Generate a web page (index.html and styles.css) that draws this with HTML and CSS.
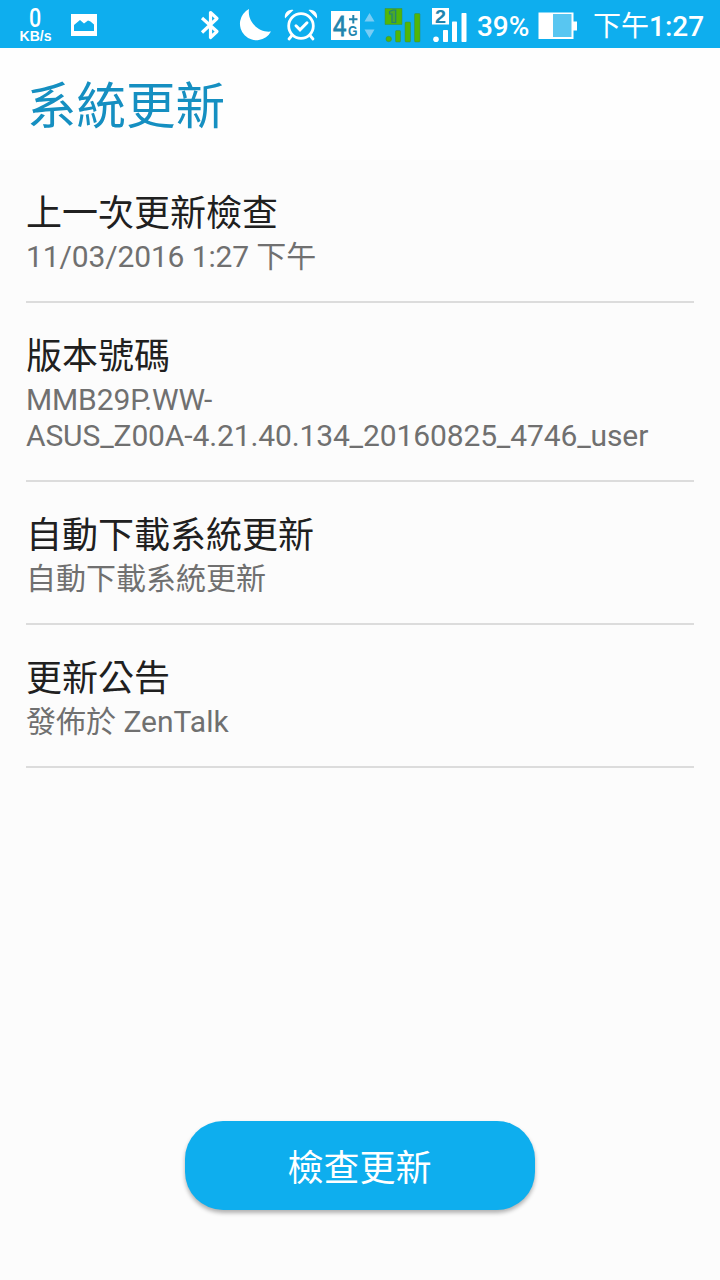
FILE: index.html
```html
<!DOCTYPE html>
<html lang="zh-Hant">
<head>
<meta charset="utf-8">
<title>系統更新</title>
<link rel="stylesheet" href="styles.css">
</head>
<body>
<header class="status">
  <div class="speed"><span class="speed-value">0</span><span class="speed-unit">KB/s</span></div>
  <svg class="picture" width="26" height="22" viewBox="0 0 26 22"><path fill="#fff" fill-rule="evenodd" d="M0 0h26v22H0zM3 17h20v-6.500L19.500 7.500 17 6.500 13 9.500 9 6 3 11z"/></svg>
  <div class="indicators">
    <svg class="bluetooth" width="20" height="34" viewBox="0 0 20 34"><path fill="none" stroke="#fff" stroke-width="3.200" stroke-linejoin="round" d="M2 10l15 13.500-6.500 6V4.500l6.500 6L2 24.500"/></svg>
    <svg class="moon" width="34" height="34" viewBox="0 0 34 34"><path fill="#fff" d="M11 1A16.500 16.500 0 1 0 33 23.500C22 25 9 15 11 1z"/></svg>
    <svg class="alarm" width="34" height="34" viewBox="0 0 34 34"><g fill="none" stroke="#fff" stroke-linecap="round"><circle cx="17" cy="18" r="12.300" stroke-width="2.800"/><path stroke-width="3" d="M12 17.800l4 4 7-7"/><path stroke-width="2.800" d="M7.500 28L5 31M26.500 28l2.500 3"/></g><path fill="#fff" d="M1 10.500C0 5 4 1 9.500 2zM33 10.500C34 5 30 1 24.500 2z"/></svg>
    <svg class="network" width="45" height="30" viewBox="0 0 45 30"><path fill="#fff" d="M0 0h29v29H0z"/><g class="network-text"><text class="network-four" x="2" y="24.800" textLength="13.500" lengthAdjust="spacingAndGlyphs">4</text><text class="network-g" x="17" y="25" textLength="9.500" lengthAdjust="spacingAndGlyphs">G</text></g><path stroke="#2185ae" stroke-width="2" d="M18 8.300h8.500M22.300 4v8.500"/><path fill="#79cdf5" d="M33.500 10.500l5-8.500 5 8.500zM33.500 18.500l5 8.500 5-8.500z"/></svg>
    <svg class="signal-one" width="37" height="36" viewBox="0 0 37 36"><g fill="#51b608" stroke="#388b4c" stroke-width=".5"><path d="M1 1.500h17v16H1z"/><circle cx="4.700" cy="32" r="2.800"/><rect x="11.500" y="23.500" width="5" height="11.500" rx="1"/><rect x="21" y="15" width="5.500" height="20" rx="1"/><rect x="30.500" y="6.500" width="5.500" height="28.500" rx="1"/></g><path fill="#4ba829" stroke="#218078" stroke-width="1.200" d="M5.500 4.500L9 3h2.700v12.500H8v-8.500H5.500z"/></svg>
    <svg class="signal-two" width="37" height="36" viewBox="0 0 37 36"><g fill="#fff"><path d="M0 1h17v16.500H0z"/><circle cx="4" cy="32.300" r="2.800"/><rect x="11" y="23" width="5" height="12" rx=".7"/><rect x="20" y="14.500" width="5" height="20.500" rx=".7"/><rect x="29.500" y="6" width="5" height="29" rx=".7"/></g><text class="sim-number" x="3" y="15.500" textLength="11" lengthAdjust="spacingAndGlyphs">2</text></svg>
    <span class="percent">39%</span>
    <svg class="battery" width="40" height="28" viewBox="0 0 40 28"><path fill="#fff" d="M.5.5h35v9H39v9h-3.500v8.500H.5z"/><path fill="#58c6f1" d="M15 2h18.500v23H15z"/></svg>
    <span class="clock"><span class="clock-period">下午</span>1:27</span>
  </div>
</header>
<h1 class="page-title">系統更新</h1>
<main class="settings">
  <section class="item"><h2 class="item-title">上一次更新檢查</h2><p class="item-summary item-summary-tight">11/03/2016 1:27 下午</p></section>
  <section class="item"><h2 class="item-title">版本號碼</h2><p class="item-summary item-summary-tight">MMB29P.WW-<br>ASUS_Z00A-4.21.40.134_20160825_4746_user</p></section>
  <section class="item"><h2 class="item-title">自動下載系統更新</h2><p class="item-summary">自動下載系統更新</p></section>
  <section class="item"><h2 class="item-title">更新公告</h2><p class="item-summary">發佈於 ZenTalk</p></section>
</main>
<footer class="actions"><button class="check">檢查更新</button></footer>
</body>
</html>
```
FILE: styles.css
```css
* { box-sizing: border-box; }
body {
  margin: 0;
  height: 1280px;
  display: flex;
  flex-direction: column;
  background: #fcfcfc;
  font-family: Roboto, "Noto Sans CJK TC", sans-serif;
  overflow: hidden;
}
h1, h2, p { margin: 0; font-weight: 400; }
svg { display: block; flex: none; }
.status {
  height: 48px;
  flex: none;
  display: flex;
  align-items: flex-start;
  padding-left: 18px;
  background: #0eaeee;
  color: #fff;
}
.speed {
  width: 35px;
  padding-top: 8px;
  display: flex;
  flex-direction: column;
  align-items: center;
}
.speed-value { font-size: 25px; line-height: 21px; font-weight: 500; transform: scaleX(.86); }
.speed-unit { font: bold 14px/15px "Liberation Sans", sans-serif; white-space: nowrap; }
.picture { margin: 14px 0 0 18px; }
.indicators { display: flex; align-items: flex-start; margin-left: 103px; }
.bluetooth { margin-top: 8px; }
.moon { margin: 8px 0 0 18px; }
.alarm { margin: 8px 0 0 12px; }
.network { margin: 11px 0 0 13px; }
.network-text { fill: #2185ae; font-family: "Liberation Sans", sans-serif; font-weight: 700; }
.network-four { font-size: 30px; font-weight: 400; stroke: #2185ae; stroke-width: .9px; }
.network-g { font-size: 15px; }
.signal-one { margin: 7px 0 0 8px; }
.signal-two { margin: 7px 0 0 11px; }
.sim-number { fill: #2185ae; font: bold 18px "Liberation Sans", sans-serif; }
.percent { margin: 9px 0 0 8px; width: 53px; font-size: 28px; line-height: 36px; font-weight: 500; letter-spacing: -.1px; white-space: nowrap; }
.battery { margin: 12px 0 0 8px; }
.clock { margin: 9px 0 0 15px; font-size: 28px; line-height: 36px; font-weight: 500; white-space: nowrap; }
.clock-period { font-weight: 400; }
.page-title {
  height: 112px;
  flex: none;
  padding: 22px 0 0 27px;
  background: #fefefe;
  color: #158fc1;
  font-size: 49.500px;
  line-height: 74px;
}
.settings { padding: 0 26px; }
.item { padding: 30px 0 26px; border-bottom: 2px solid #dcdcdc; }
.item-title { color: #202020; font-size: 36px; line-height: 48px; height: 49px; }
.item-summary { color: #707070; font-size: 30px; line-height: 36px; }
.item-summary-tight { letter-spacing: -.13px; }
.actions { margin-top: auto; padding-bottom: 70px; display: flex; justify-content: center; }
.check {
  width: 350px;
  height: 89px;
  padding: 6px 1px 0 0;
  border: 0;
  border-radius: 38px;
  background: #0eaeee;
  color: #fff;
  font: 400 36px/48px Roboto, "Noto Sans CJK TC", sans-serif;
  box-shadow: 0 3px 4px rgba(0, 0, 0, .3);
}
```
